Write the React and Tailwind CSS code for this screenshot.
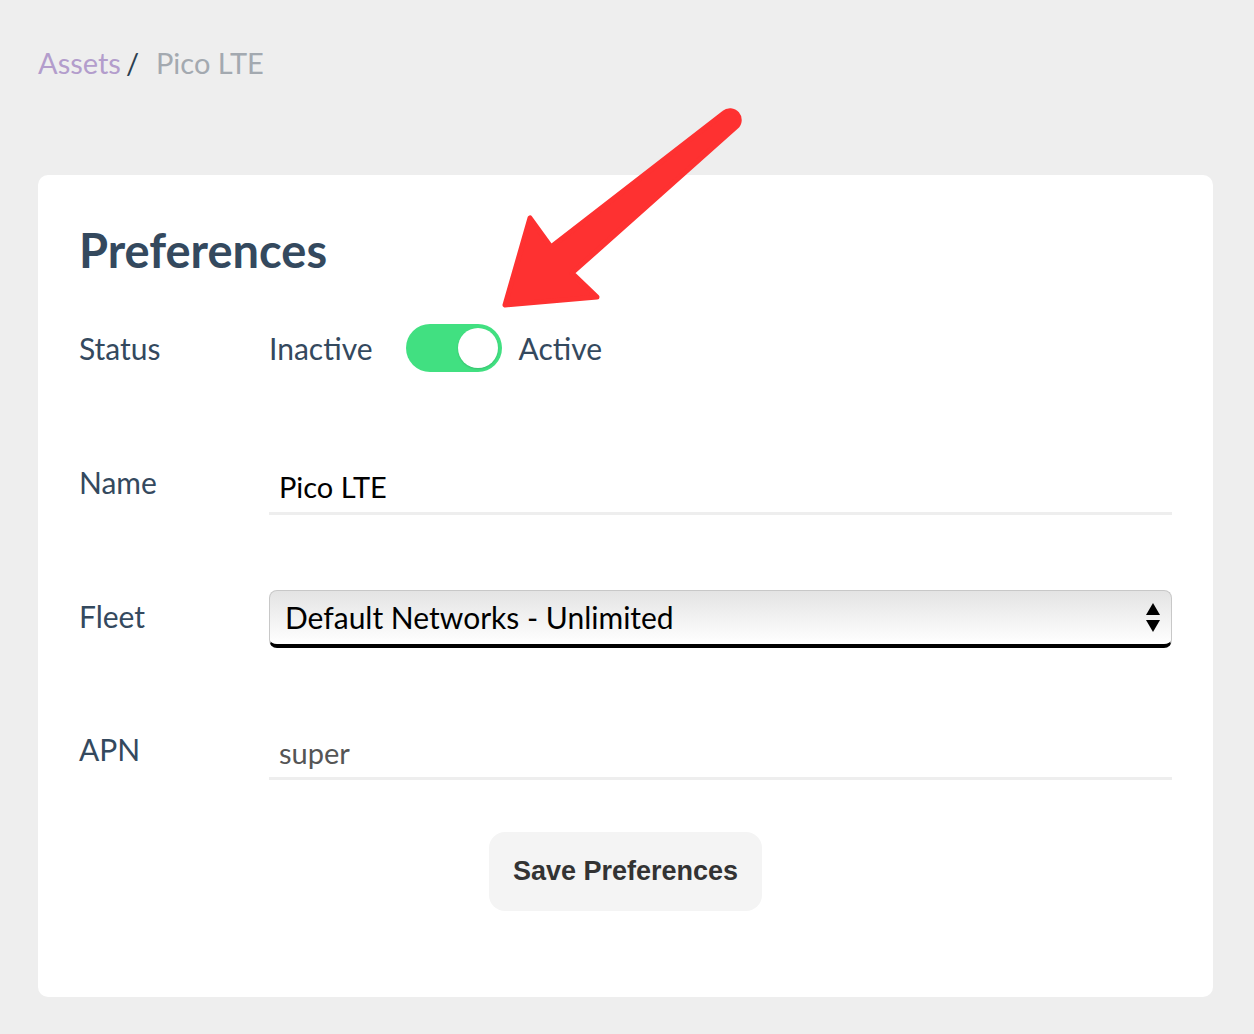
import React from 'react';

const font = { fontFamily: 'Lato, "Noto Sans", sans-serif' };

const Label = ({ children, className = '' }) => (
  <div className={`w-[190px] shrink-0 text-[30px] text-[#34495e] ${className}`}>{children}</div>
);

const Arrow = () => (
  <svg className="pointer-events-none absolute left-0 top-0" width="1254" height="1034" viewBox="0 0 1254 1034">
    <path
      d="M 724 113 L 551 247 L 530 218 L 505 305 L 597 297 L 572 273 L 736 127 A 9 9 0 0 0 724 113 Z"
      fill="#fe3131"
      stroke="#fe3131"
      strokeWidth="5"
      strokeLinejoin="round"
    />
  </svg>
);

const App = () => {
  return (
    <div className="relative min-h-[1034px] bg-[#eeeeee] pl-[38px] pr-[41px] pt-[40px] pb-[37px]" style={font}>
      <nav className="flex h-[46px] items-center text-[29px]">
        <span className="text-[#b39dcc]">Assets</span>
        <span className="ml-[5px] text-[#2c3e50]">/</span>
        <span className="ml-[17px] text-[#a3a9b0]">Pico LTE</span>
      </nav>

      <div className="mt-[89px] rounded-[10px] bg-white px-[41px] pt-[50px] pb-[86px]">
        <h1 className="h-[50px] text-[47px] font-bold leading-[50px] text-[#34495e]">Preferences</h1>

        <div className="mt-[48px] flex h-[50px] items-center">
          <Label>Status</Label>
          <span className="text-[30px] text-[#34495e]">Inactive</span>
          <div className="ml-[33px] flex h-[48px] w-[96px] items-center justify-end rounded-full bg-[#41e081] pr-[4px]">
            <div className="h-[40px] w-[40px] rounded-full bg-white shadow-[0_1px_2px_rgba(0,0,0,0.15)]" />
          </div>
          <span className="ml-[17px] text-[30px] text-[#34495e]">Active</span>
        </div>

        <div className="mt-[87px] flex items-start">
          <Label className="flex h-[44px] items-center">Name</Label>
          <input
            defaultValue="Pico LTE"
            className="h-[55px] flex-1 border-b-[3px] border-[#eeeeee] bg-transparent px-[10px] text-[29px] text-black outline-none"
            style={font}
          />
        </div>

        <div className="mt-[75px] flex items-center">
          <Label className="-mt-[6px]">Fleet</Label>
          <div className="relative flex-1">
            <div className="flex h-[58px] items-center rounded-[8px] border border-[#c8c8c8] border-b-[4px] border-b-black bg-gradient-to-b from-[#e4e4e4] to-white pl-[15px] text-[30px] text-black">
              Default Networks - Unlimited
            </div>
            <svg className="absolute right-[11px] top-[12px]" width="16" height="32" viewBox="0 0 16 32">
              <path d="M8 1 L15 13 L1 13 Z" fill="#000" />
              <path d="M1 18 L15 18 L8 30 Z" fill="#000" />
            </svg>
          </div>
        </div>

        <div className="mt-[79px] flex items-start">
          <Label className="flex h-[44px] items-center">APN</Label>
          <input
            defaultValue="super"
            className="h-[53px] flex-1 border-b-[3px] border-[#eeeeee] bg-transparent px-[10px] text-[29px] text-[#555555] outline-none"
            style={font}
          />
        </div>

        <div className="mt-[52px] flex justify-center">
          <button
            className="h-[79px] w-[273px] rounded-[16px] bg-[#f4f4f4] text-[27px] font-bold text-[#333333]"
            style={{ fontFamily: '"Liberation Sans", Arial, sans-serif' }}
          >
            Save Preferences
          </button>
        </div>
      </div>

      <Arrow />
    </div>
  );
};

export default App;
